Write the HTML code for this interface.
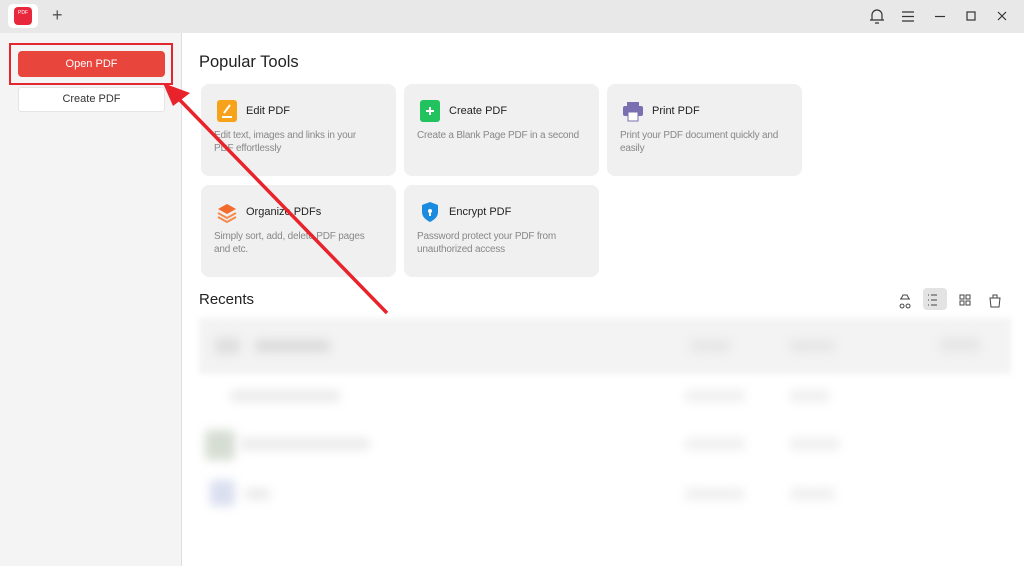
<!DOCTYPE html>
<html><head><meta charset="utf-8"><style>
*{margin:0;padding:0;box-sizing:border-box}
body{width:1024px;height:566px;overflow:hidden;font-family:"Liberation Sans",sans-serif;background:#fff;position:relative}
.top{position:absolute;left:0;top:0;width:1024px;height:33px;background:#e8e8e8}
.side{position:absolute;left:0;top:33px;width:182px;height:533px;background:#f4f4f4;border-right:1px solid #ddd}
.abs{position:absolute}
.card{position:absolute;width:195px;height:92px;background:#f0f0f0;border-radius:8px}
.card .t{position:absolute;left:45px;top:21px;font-size:11px;color:#222}
.card .d{position:absolute;left:13px;top:45px;font-size:10px;letter-spacing:-0.2px;color:#888;line-height:13px;width:185px;white-space:nowrap}
.card .i{position:absolute;left:16px;top:16px;width:20px;height:22px}
.bl{position:absolute;background:#e6e6e6;filter:blur(5px);border-radius:4px}
</style></head><body>
<div class="top"></div>
<div class="abs" style="left:8px;top:4px;width:30px;height:24px;background:#fff;border-radius:5px"></div>
<div class="abs" style="left:14px;top:7px;width:18px;height:18px;background:#e8273c;border-radius:4px;color:#fff;font-size:5px;text-align:center;line-height:12px">PDF</div>
<div class="abs" style="left:52px;top:5px;font-size:18px;color:#555">+</div>
<svg class="abs" style="left:862px;top:0" width="150" height="33" fill="none" stroke="#333" stroke-width="1.2">
<path d="M10 20 V15 a5 5 0 0 1 10 0 V20 H8 H22 M13 23 h4"/>
<path d="M40 12 h12 M40 16.5 h12 M40 21 h12"/>
<path d="M73 16.5 h10"/>
<rect x="105" y="12" width="8" height="8"/>
<path d="M136 12 l8 8 M144 12 l-8 8"/>
</svg>
<div class="side"></div>
<div class="abs" style="left:9px;top:43px;width:164px;height:42px;border:2px solid #e3262f"></div>
<div class="abs" style="left:18px;top:51px;width:147px;height:26px;background:#e8453c;border-radius:4px;color:#fff;font-size:11px;text-align:center;line-height:26px">Open PDF</div>
<div class="abs" style="left:18px;top:87px;width:147px;height:25px;background:#fff;border-radius:3px;border:1px solid #e4e4e4;font-size:11px;text-align:center;line-height:23px;color:#333">Create PDF</div>
<div class="abs" style="left:199px;top:53px;font-size:16.5px;color:#222">Popular Tools</div>
<div class="card" style="left:201px;top:84px"><svg class="i" viewBox="0 0 20 22"><rect width="20" height="22" rx="3" fill="#f7a21b"/><path d="M5 17h10M7 13l6-8" stroke="#fff" stroke-width="2"/></svg><div class="t">Edit PDF</div><div class="d">Edit text, images and links in your<br>PDF effortlessly</div></div>
<div class="card" style="left:404px;top:84px"><svg class="i" viewBox="0 0 20 22"><rect width="20" height="22" rx="3" fill="#22c35e"/><path d="M10 7v8M6 11h8" stroke="#fff" stroke-width="2"/></svg><div class="t">Create PDF</div><div class="d">Create a Blank Page PDF in a second</div></div>
<div class="card" style="left:607px;top:84px"><svg class="i" viewBox="0 0 20 22"><rect x="4" y="2" width="12" height="5" fill="#7a6fb0"/><rect x="0" y="6" width="20" height="10" rx="2" fill="#7a6fb0"/><rect x="5" y="12" width="10" height="9" fill="#fff" stroke="#7a6fb0"/></svg><div class="t">Print PDF</div><div class="d">Print your PDF document quickly and<br>easily</div></div>
<div class="card" style="left:201px;top:185px"><svg class="i" viewBox="0 0 20 22"><path d="M10 3l9 5-9 5-9-5z" fill="#f26a2c"/><path d="M1 12l9 5 9-5M1 16l9 5 9-5" stroke="#f58a4c" stroke-width="2" fill="none"/></svg><div class="t">Organize PDFs</div><div class="d">Simply sort, add, delete PDF pages<br>and etc.</div></div>
<div class="card" style="left:404px;top:185px"><svg class="i" viewBox="0 0 20 22"><path d="M10 1l8 3v7c0 5-4 8-8 10-4-2-8-5-8-10V4z" fill="#1b8be0"/><circle cx="10" cy="10" r="2" fill="#fff"/><path d="M10 11v4" stroke="#fff" stroke-width="2"/></svg><div class="t">Encrypt PDF</div><div class="d">Password protect your PDF from<br>unauthorized access</div></div>
<div class="abs" style="left:199px;top:291px;font-size:15px;color:#222">Recents</div>
<div class="abs" style="left:923px;top:288px;width:24px;height:22px;background:#e3e3e3;border-radius:4px"></div>
<svg class="abs" style="left:895px;top:290px" width="115" height="20" fill="none" stroke="#444" stroke-width="1">
<path d="M5 9h10M6 9l2-4h4l2 4 M7 14a2 2 0 1 0 0.1 0 M13 14a2 2 0 1 0 0.1 0"/>
<path d="M33 5h1M36 5h6M33 10h1M36 10h6M33 15h1M36 15h6"/>
<rect x="65" y="5" width="4" height="4"/><rect x="71" y="5" width="4" height="4"/><rect x="65" y="11" width="4" height="4"/><rect x="71" y="11" width="4" height="4"/>
<path d="M95 8h10l-1 9h-8z M98 8V5h4v3"/>
</svg>
<div class="abs" style="left:199px;top:318px;width:812px;height:56px;background:#f3f3f3;filter:blur(3px)"></div>
<div class="bl" style="left:215px;top:338px;width:25px;height:16px;background:#dedede"></div>
<div class="bl" style="left:255px;top:340px;width:75px;height:12px;background:#dadada"></div>
<div class="bl" style="left:690px;top:340px;width:40px;height:12px"></div>
<div class="bl" style="left:790px;top:340px;width:45px;height:12px"></div>
<div class="bl" style="left:940px;top:338px;width:40px;height:14px"></div>
<div class="bl" style="left:230px;top:390px;width:110px;height:12px;background:#ebebeb"></div>
<div class="bl" style="left:685px;top:390px;width:60px;height:12px;background:#efefef"></div>
<div class="bl" style="left:790px;top:390px;width:40px;height:12px;background:#efefef"></div>
<div class="bl" style="left:205px;top:430px;width:30px;height:30px;background:#d6ddd3"></div>
<div class="bl" style="left:240px;top:438px;width:130px;height:12px;background:#ebebeb"></div>
<div class="bl" style="left:685px;top:438px;width:60px;height:12px;background:#efefef"></div>
<div class="bl" style="left:790px;top:438px;width:50px;height:12px;background:#efefef"></div>
<div class="bl" style="left:210px;top:480px;width:25px;height:26px;background:#dadff0"></div>
<div class="bl" style="left:245px;top:488px;width:25px;height:12px;background:#ebebeb"></div>
<div class="bl" style="left:685px;top:488px;width:60px;height:12px;background:#efefef"></div>
<div class="bl" style="left:790px;top:488px;width:45px;height:12px;background:#efefef"></div>
<svg class="abs" style="left:0;top:0" width="1024" height="566">
<line x1="387" y1="313" x2="175" y2="95" stroke="#e8232b" stroke-width="3.5"/>
<path d="M163 83 L190 93 L173 106 Z" fill="#e8232b"/>
</svg>
</body></html>
